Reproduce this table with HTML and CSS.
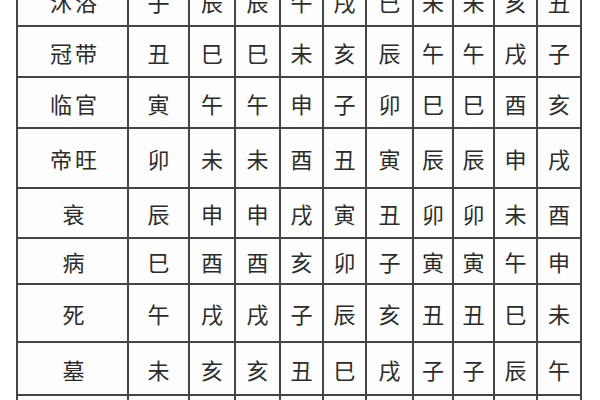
FILE: index.html
```html
<!DOCTYPE html>
<html lang="zh">
<head>
<meta charset="utf-8">
<title>十二长生表</title>
<link rel="stylesheet" href="styles.css">
</head>
<body>
<div class="page">
  <div class="grid">
    <div class="cell label">沐浴</div><div class="cell">子</div><div class="cell">辰</div><div class="cell">辰</div><div class="cell">午</div><div class="cell">戌</div><div class="cell">巳</div><div class="cell">未</div><div class="cell">未</div><div class="cell">亥</div><div class="cell">丑</div>
    <div class="cell label">冠带</div><div class="cell">丑</div><div class="cell">巳</div><div class="cell">巳</div><div class="cell">未</div><div class="cell">亥</div><div class="cell">辰</div><div class="cell">午</div><div class="cell">午</div><div class="cell">戌</div><div class="cell">子</div>
    <div class="cell label">临官</div><div class="cell">寅</div><div class="cell">午</div><div class="cell">午</div><div class="cell">申</div><div class="cell">子</div><div class="cell">卯</div><div class="cell">巳</div><div class="cell">巳</div><div class="cell">酉</div><div class="cell">亥</div>
    <div class="cell label">帝旺</div><div class="cell">卯</div><div class="cell">未</div><div class="cell">未</div><div class="cell">酉</div><div class="cell">丑</div><div class="cell">寅</div><div class="cell">辰</div><div class="cell">辰</div><div class="cell">申</div><div class="cell">戌</div>
    <div class="cell label">衰</div><div class="cell">辰</div><div class="cell">申</div><div class="cell">申</div><div class="cell">戌</div><div class="cell">寅</div><div class="cell">丑</div><div class="cell">卯</div><div class="cell">卯</div><div class="cell">未</div><div class="cell">酉</div>
    <div class="cell label">病</div><div class="cell">巳</div><div class="cell">酉</div><div class="cell">酉</div><div class="cell">亥</div><div class="cell">卯</div><div class="cell">子</div><div class="cell">寅</div><div class="cell">寅</div><div class="cell">午</div><div class="cell">申</div>
    <div class="cell label">死</div><div class="cell">午</div><div class="cell">戌</div><div class="cell">戌</div><div class="cell">子</div><div class="cell">辰</div><div class="cell">亥</div><div class="cell">丑</div><div class="cell">丑</div><div class="cell">巳</div><div class="cell">未</div>
    <div class="cell label">墓</div><div class="cell">未</div><div class="cell">亥</div><div class="cell">亥</div><div class="cell">丑</div><div class="cell">巳</div><div class="cell">戌</div><div class="cell">子</div><div class="cell">子</div><div class="cell">辰</div><div class="cell">午</div>
    <div class="cell label"></div><div class="cell"></div><div class="cell"></div><div class="cell"></div><div class="cell"></div><div class="cell"></div><div class="cell"></div><div class="cell"></div><div class="cell"></div><div class="cell"></div><div class="cell"></div>
  </div>
</div>
</body>
</html>
```

FILE: styles.css
```css
html, body {
  margin: 0;
  padding: 0;
  background: #ffffff;
}

body {
  width: 600px;
  height: 400px;
  overflow: hidden;
  font-family: "Noto Sans CJK SC", "Noto Sans CJK TC", sans-serif;
}

.page {
  padding-left: 16px;
  margin-top: -25px;
}

.grid {
  display: inline-grid;
  grid-template-columns: 109px 59px 44px 43px 41px 41px 45px 38px 39px 41px 42px;
  grid-template-rows: 48px 49px 49px 58px 48px 44px 56px 51px 50px;
  gap: 2px;
  padding: 2px;
  background: #454545;
}

.cell {
  background: #fdfdfd;
  display: flex;
  align-items: center;
  justify-content: center;
  font-size: 22px;
  line-height: 1;
  color: #2b2b2b;
}

.label {
  letter-spacing: 3px;
  padding-left: 5px;
}
```
